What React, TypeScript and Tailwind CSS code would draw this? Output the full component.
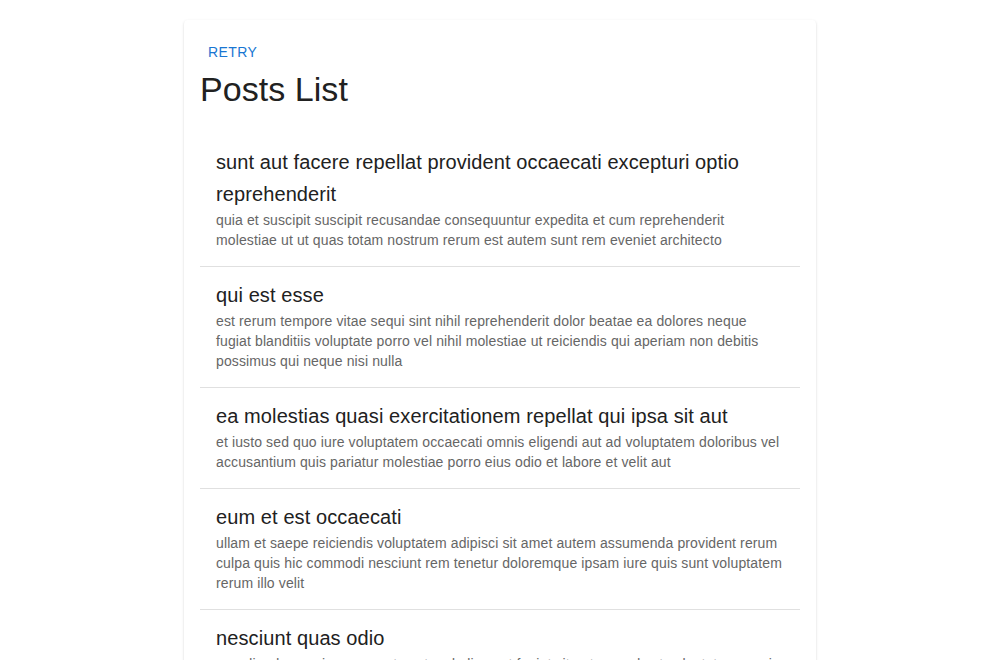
const posts = [
  {
    id: 1,
    title: "sunt aut facere repellat provident occaecati excepturi optio reprehenderit",
    body: "quia et suscipit suscipit recusandae consequuntur expedita et cum reprehenderit molestiae ut ut quas totam nostrum rerum est autem sunt rem eveniet architecto",
  },
  {
    id: 2,
    title: "qui est esse",
    body: "est rerum tempore vitae sequi sint nihil reprehenderit dolor beatae ea dolores neque fugiat blanditiis voluptate porro vel nihil molestiae ut reiciendis qui aperiam non debitis possimus qui neque nisi nulla",
  },
  {
    id: 3,
    title: "ea molestias quasi exercitationem repellat qui ipsa sit aut",
    body: "et iusto sed quo iure voluptatem occaecati omnis eligendi aut ad voluptatem doloribus vel accusantium quis pariatur molestiae porro eius odio et labore et velit aut",
  },
  {
    id: 4,
    title: "eum et est occaecati",
    body: "ullam et saepe reiciendis voluptatem adipisci sit amet autem assumenda provident rerum culpa quis hic commodi nesciunt rem tenetur doloremque ipsam iure quis sunt voluptatem rerum illo velit",
  },
  {
    id: 5,
    title: "nesciunt quas odio",
    body: "repudiandae veniam quaerat sunt sed alias aut fugiat sit autem sed est voluptatem omnis possimus esse voluptatibus quis est aut tenetur dolor neque",
  },
];

const App = () => {
  return (
    <div className="min-h-screen bg-white pt-5 font-['Liberation_Sans',Arial,sans-serif]">
      <div className="mx-auto w-[632px] rounded bg-white px-4 pt-4 pb-4 shadow-[0_2px_1px_-1px_rgba(0,0,0,0.2),0_1px_1px_0_rgba(0,0,0,0.14),0_1px_3px_0_rgba(0,0,0,0.12)]">
        <button className="block px-2 py-1 text-sm leading-6 font-medium uppercase tracking-[0.4px] text-[#1976d2]">
          Retry
        </button>
        <h1 className="mb-6 text-[34px] leading-[42px] tracking-[0.05px] text-[#212121]">Posts List</h1>

        <ul>
          {posts.map((post, index) => (
            <li
              key={post.id}
              className={
                index < posts.length - 1
                  ? "border-b border-[#e0e0e0] px-4 pt-3 pb-4"
                  : "px-4 pt-3 pb-4"
              }
            >
              <h2 className="text-xl leading-8 tracking-[0.1px] text-[#212121]">{post.title}</h2>
              <p className="text-sm leading-5 tracking-[0.12px] text-[#666666]">{post.body}</p>
            </li>
          ))}
        </ul>
      </div>
    </div>
  );
};

export default App;
